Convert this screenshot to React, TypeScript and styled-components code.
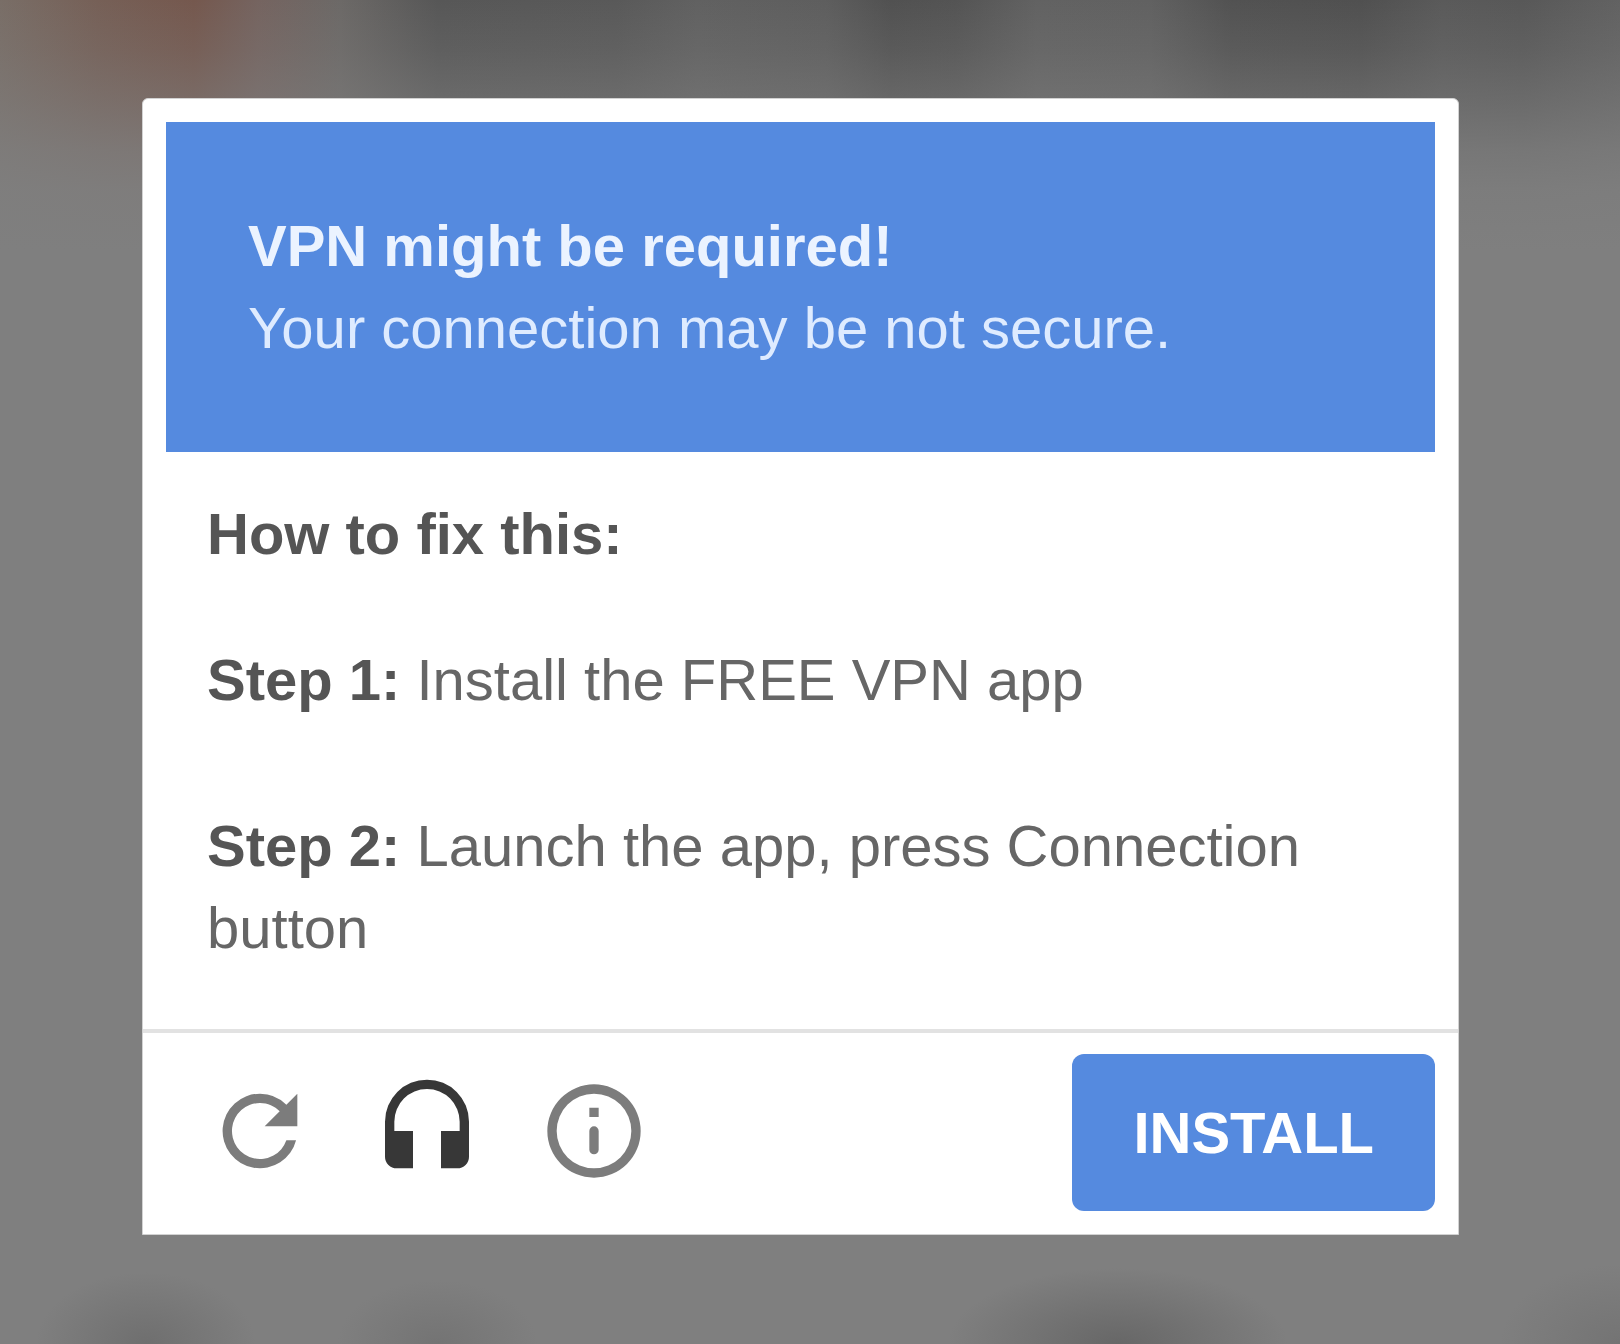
import React from "react";
import styled, { createGlobalStyle } from "styled-components";

const blue = "#558adf";

const GlobalStyle = createGlobalStyle`
  *, *::before, *::after {
    box-sizing: border-box;
  }
  body {
    margin: 0;
    background: #7f7f7f;
    font-family: "Liberation Sans", Arial, Helvetica, sans-serif;
  }
`;

/* Dimmed, out-of-focus page behind the dialog. */
const Backdrop = styled.div`
  display: flex;
  align-items: flex-start;
  min-height: 100vh;
  padding: 98px 161px 109px 142px;
  background:
    radial-gradient(ellipse 110px 72px at 9% 100%, rgba(100, 100, 100, 0.6), rgba(127, 127, 127, 0)),
    radial-gradient(ellipse 100px 64px at 27% 100%, rgba(108, 108, 108, 0.6), rgba(127, 127, 127, 0)),
    radial-gradient(ellipse 170px 76px at 69% 100%, rgba(90, 90, 90, 0.65), rgba(127, 127, 127, 0)),
    radial-gradient(ellipse 120px 80px at 100% 100%, rgba(108, 108, 108, 0.6), rgba(127, 127, 127, 0)),
    linear-gradient(
      to bottom,
      rgba(127, 127, 127, 0) 0,
      rgba(127, 127, 127, 0.2) 50px,
      rgba(127, 127, 127, 0.48) 100px,
      rgba(127, 127, 127, 0.78) 150px,
      rgba(127, 127, 127, 0.93) 190px,
      #7f7f7f 250px
    ),
    linear-gradient(
      to right,
      #796e67 0%,
      #766057 6%,
      #75584e 12%,
      #756460 16%,
      #6c6967 21%,
      #575757 27%,
      #595959 38%,
      #616161 43%,
      #5e5e5e 51%,
      #515151 55%,
      #545454 59%,
      #626262 64%,
      #616161 71%,
      #525252 76%,
      #505050 84%,
      #5a5a5a 89%,
      #585858 94%,
      #626262 100%
    );
`;

const Dialog = styled.section`
  flex: 1;
  max-width: 1317px;
  border: 1px solid #d2d2d2;
  border-radius: 6px 6px 0 0;
  background: #fff;
  font-size: 58px;
  line-height: 82px;
`;

const Banner = styled.header`
  margin: 23px 23px 0;
  padding: 83px 82px;
  background: ${blue};
  color: #deebff;
`;

const Title = styled.h1`
  margin: 0;
  color: #ebf3ff;
  font-size: inherit;
  font-weight: 700;
`;

const Paragraph = styled.p`
  margin: 0;
`;

const Instructions = styled.div`
  padding: 41px 64px 60px;
  color: #666;
`;

const Subtitle = styled.h2`
  margin: 0 0 64px;
  color: #555;
  font-size: inherit;
  font-weight: 700;
`;

const Steps = styled.ol`
  display: grid;
  gap: 84px;
  margin: 0;
  padding: 0;
  list-style: none;
`;

const StepLabel = styled.strong`
  color: #555;
`;

const Footer = styled.footer`
  display: flex;
  align-items: center;
  justify-content: space-between;
  padding: 21px 23px 23px 61px;
  border-top: 4px solid #e2e2e2;
`;

const Tools = styled.div`
  display: flex;
  gap: 55px;
  padding-bottom: 4px;
`;

const ToolButton = styled.button<{ $color: string }>`
  display: block;
  width: 112px;
  height: 112px;
  padding: 0;
  border: 0;
  background: none;
  color: ${(p) => p.$color};
  cursor: pointer;

  svg {
    display: block;
    width: 100%;
    height: 100%;
    fill: currentColor;
  }
`;

const InstallButton = styled.button`
  height: 157px;
  padding: 0 61px;
  border: 0;
  border-radius: 12px;
  background: ${blue};
  color: #fff;
  font: inherit;
  font-weight: 700;
  cursor: pointer;
`;

const tools = [
  {
    label: "Refresh",
    color: "#7c7c7c",
    path: "M17.65 6.35A7.96 7.96 0 0 0 12 4a8 8 0 1 0 7.73 10h-2.08A6 6 0 1 1 12 6c1.66 0 3.14.69 4.22 1.78L13 11h7V4z",
  },
  {
    label: "Audio",
    color: "#373737",
    path: "M12 1a9 9 0 0 0-9 9v7.5A2.5 2.5 0 0 0 5.5 20H9v-8H5v-2a7 7 0 0 1 14 0v2h-4v8h3.5a2.5 2.5 0 0 0 2.5-2.5V10a9 9 0 0 0-9-9z",
  },
  {
    label: "Information",
    color: "#7c7c7c",
    path: "M12 2a10 10 0 1 0 0 20 10 10 0 0 0 0-20zm0 18a8 8 0 1 1 0-16 8 8 0 0 1 0 16zM11 7h2v2h-2zM12 11a1 1 0 0 1 1 1v4a1 1 0 0 1-2 0v-4a1 1 0 0 1 1-1z",
  },
];

export default function App() {
  return (
    <>
      <GlobalStyle />
      <Backdrop>
        <Dialog role="dialog" aria-labelledby="dialog-title">
          <Banner>
            <Title id="dialog-title">VPN might be required!</Title>
            <Paragraph>Your connection may be not secure.</Paragraph>
          </Banner>
          <Instructions>
            <Subtitle>How to fix this:</Subtitle>
            <Steps>
              <li>
                <StepLabel>Step 1:</StepLabel> Install the FREE VPN app
              </li>
              <li>
                <StepLabel>Step 2:</StepLabel> Launch the app, press Connection button
              </li>
            </Steps>
          </Instructions>
          <Footer>
            <Tools>
              {tools.map((tool) => (
                <ToolButton key={tool.label} type="button" aria-label={tool.label} $color={tool.color}>
                  <svg viewBox="0 0 24 24" aria-hidden="true">
                    <path d={tool.path} />
                  </svg>
                </ToolButton>
              ))}
            </Tools>
            <InstallButton type="button">INSTALL</InstallButton>
          </Footer>
        </Dialog>
      </Backdrop>
    </>
  );
}
